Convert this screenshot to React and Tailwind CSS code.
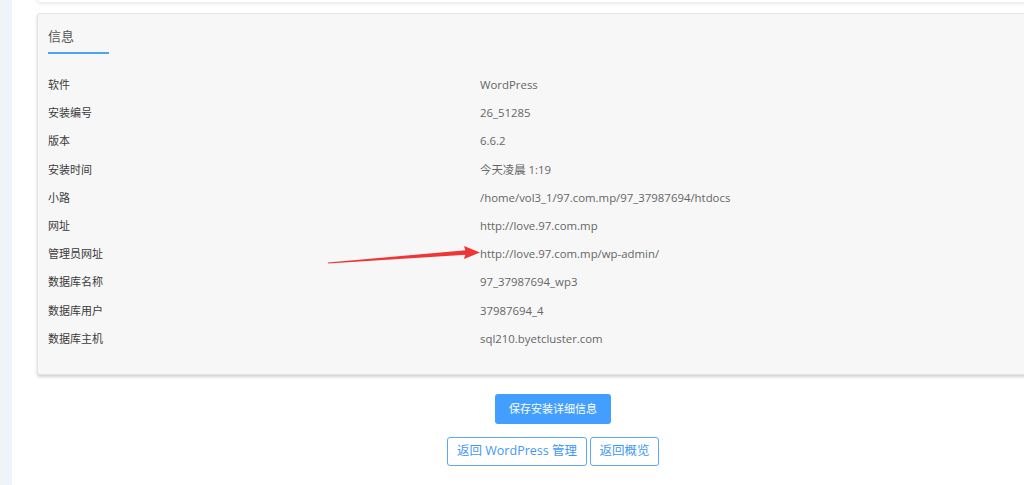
const rows = [
  ["软件", "WordPress"],
  ["安装编号", "26_51285"],
  ["版本", "6.6.2"],
  ["安装时间", "今天凌晨 1:19"],
  ["小路", "/home/vol3_1/97.com.mp/97_37987694/htdocs"],
  ["网址", "http://love.97.com.mp"],
  ["管理员网址", "http://love.97.com.mp/wp-admin/"],
  ["数据库名称", "97_37987694_wp3"],
  ["数据库用户", "37987694_4"],
  ["数据库主机", "sql210.byetcluster.com"],
];

function Arrow() {
  return (
    <svg className="absolute left-0 top-0 pointer-events-none" width="1024" height="485">
      <polygon points="328,262.5 466,250.2 466,254.8 328,263.5" fill="#ef3535" />
      <polygon points="480,252.5 464,246 466,252.5 464,259" fill="#ef3535" />
    </svg>
  );
}

export default function App() {
  return (
    <div
      className="relative w-[1024px] h-[485px] overflow-hidden bg-white flex"
      style={{ fontFamily: '"Open Sans", "Noto Sans CJK SC", sans-serif' }}
    >
      <div className="w-3 shrink-0 bg-[#eef4f9]" />
      <div className="w-[1082px] shrink-0 px-[25px]">
        <div className="h-10 -mt-[38px] bg-white rounded-b shadow-[0_1px_4px_rgba(0,0,0,0.12)]" />
        <div className="mt-[11px] bg-[#f7f7f7] border border-[#e3e3e3] rounded-[3px] shadow-[0_2px_3px_rgba(0,0,0,0.18)] px-[10px] pb-[21px]">
          <div className="pt-[12px] text-[13px] leading-[20px] text-[#555]">信息</div>
          <div className="mt-[6px] w-[61px] h-[2px] bg-[#4fa3f7]" />
          <div className="mt-[17px] text-[11px]">
            {rows.map(([k, v]) => (
              <div key={k} className="flex leading-[28.2px]">
                <div className="w-[432px] shrink-0 text-[#3a3a3a]">{k}</div>
                <div className="text-[#666] text-[11.4px]">{v}</div>
              </div>
            ))}
          </div>
        </div>
        <div className="flex flex-col items-center">
          <button className="mt-[19px] w-[116px] h-[30px] rounded-[3px] bg-[#429fff] text-white text-[11px]">
            保存安装详细信息
          </button>
          <div className="mt-[13px] flex gap-[3px]">
            <button className="w-[140px] h-[29px] flex items-center justify-center rounded-[3px] border border-[#5aa8ff] bg-white text-[#3f98f5] text-[12.5px]">
              返回 WordPress 管理
            </button>
            <button className="w-[69px] h-[29px] flex items-center justify-center rounded-[3px] border border-[#5aa8ff] bg-white text-[#3f98f5] text-[12.5px]">
              返回概览
            </button>
          </div>
        </div>
      </div>
      <Arrow />
    </div>
  );
}
